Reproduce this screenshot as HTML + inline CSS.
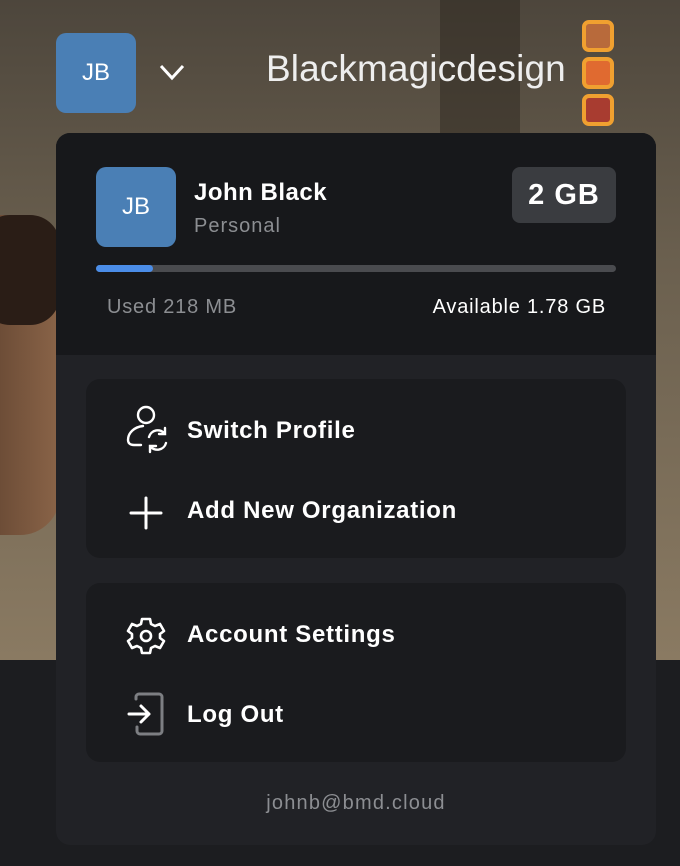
<!DOCTYPE html>
<html><head><style>
*{margin:0;padding:0;box-sizing:border-box}
body{width:680px;height:866px;overflow:hidden;font-family:"Liberation Sans",sans-serif;position:relative;background:#1c1d20}
.bg{position:absolute;left:0;top:0;width:680px;height:660px;background:linear-gradient(180deg,#4d463c 0%,#6b604f 40%,#8a7a62 100%)}
.bg2{position:absolute;left:440px;top:0;width:80px;height:140px;background:#2e2820;opacity:.5}
.face{position:absolute;left:-40px;top:215px;width:100px;height:320px;background:linear-gradient(90deg,#5a3e2c,#8a6448);border-radius:40px}
.hair{position:absolute;left:-20px;top:215px;width:80px;height:110px;background:#2a1d16;border-radius:30px}
.av{position:absolute;background:#4a7fb5;color:#fff;border-radius:10px;display:flex;align-items:center;justify-content:center}
.panel{position:absolute;left:56px;top:133px;width:600px;height:712px;border-radius:14px;background:#212226;overflow:hidden}
.top{position:absolute;left:0;top:0;width:600px;height:222px;background:#17181b}
.card{position:absolute;left:30px;width:540px;height:179px;background:#1a1b1e;border-radius:14px}
.it{position:absolute;left:131px;color:#fff;font-size:24px;font-weight:bold;letter-spacing:0.7px}
svg{position:absolute}
</style></head><body>
<div class="bg"></div><div class="bg2"></div><div class="face"></div><div class="hair"></div>
<div class="av" style="left:56px;top:33px;width:80px;height:80px;font-size:24px">JB</div>
<svg style="left:158px;top:62px" width="30" height="20"><path d="M3 4 L14 16 L25 4" stroke="#fff" stroke-width="3" fill="none"/></svg>
<div style="position:absolute;left:266px;top:48px;color:#eee;font-size:37px;letter-spacing:0.1px">Blackmagicdesign</div>
<div style="position:absolute;left:582px;top:20px;width:32px;height:32px;border-radius:7px;background:#b86a3b;border:4px solid #f0a030"></div>
<div style="position:absolute;left:582px;top:57px;width:32px;height:32px;border-radius:7px;background:#e06a30;border:4px solid #f0a030"></div>
<div style="position:absolute;left:582px;top:94px;width:32px;height:32px;border-radius:7px;background:#a83c30;border:4px solid #f0a030"></div>
<div class="panel">
<div class="top"></div>
<div class="av" style="left:40px;top:34px;width:80px;height:80px;font-size:24px">JB</div>
<div style="position:absolute;left:138px;top:46px;color:#fff;font-size:24px;letter-spacing:0.5px;font-weight:bold">John Black</div>
<div style="position:absolute;left:138px;top:82px;color:#8c8e92;font-size:20px;letter-spacing:1px">Personal</div>
<div style="position:absolute;left:456px;top:34px;width:104px;height:56px;background:#3a3c40;border-radius:8px;color:#fff;font-size:29px;font-weight:bold;letter-spacing:1px;display:flex;align-items:center;justify-content:center">2 GB</div>
<div style="position:absolute;left:40px;top:132px;width:520px;height:7px;background:#4a4b4f;border-radius:4px"><div style="width:57px;height:7px;background:#4b8de8;border-radius:4px"></div></div>
<div style="position:absolute;left:51px;top:163px;color:#8c8e92;font-size:20px;letter-spacing:0.8px">Used 218 MB</div>
<div style="position:absolute;right:50px;top:163px;color:#fff;font-size:20px;letter-spacing:0.8px">Available 1.78 GB</div>
<div class="card" style="top:246px"></div>
<div class="card" style="top:450px"></div>
<svg style="left:68px;top:270px" width="52" height="52" fill="none" stroke="#fff" stroke-width="2.4" stroke-linecap="round"><circle cx="22" cy="12" r="8"/><path d="M19 23 C10 24 4 30 4 37 C4 40 6 42 10 42 H17"/><path d="M25 34 A9 9 0 0 1 41 31 M41 25 V31 H35"/><path d="M42 40 A9 9 0 0 1 26 43 M26 49 V43 H32"/></svg>
<div class="it" style="top:284px">Switch Profile</div>
<svg style="left:72px;top:362px" width="36" height="36" stroke="#fff" stroke-width="3" stroke-linecap="round"><path d="M18 3V33M3 18H33"/></svg>
<div class="it" style="top:364px">Add New Organization</div>
<svg style="left:70px;top:483px" width="40" height="40" fill="none" stroke="#fff" stroke-width="2.6" stroke-linejoin="round"><path d="M16 3h8l1 5 4 2 5-2 4 7-4 3v4l4 3-4 7-5-2-4 2-1 5h-8l-1-5-4-2-5 2-4-7 4-3v-4l-4-3 4-7 5 2 4-2z"/><circle cx="20" cy="20" r="5"/></svg>
<div class="it" style="top:488px">Account Settings</div>
<svg style="left:70px;top:558px" width="42" height="48" fill="none" stroke-linecap="round" stroke-linejoin="round"><path d="M10 8V6a3 3 0 0 1 3-3h20a3 3 0 0 1 3 3v34a3 3 0 0 1-3 3H14a3 3 0 0 1-3-3v-4" stroke="#7d7f83" stroke-width="3"/><path d="M3 23H23M15 15l8 8-8 8" stroke="#fff" stroke-width="3"/></svg>
<div class="it" style="top:568px">Log Out</div>
<div style="position:absolute;left:0;width:600px;top:659px;text-align:center;color:#8c8e92;font-size:20px;letter-spacing:1.2px">johnb@bmd.cloud</div>
</div>
</body></html>
